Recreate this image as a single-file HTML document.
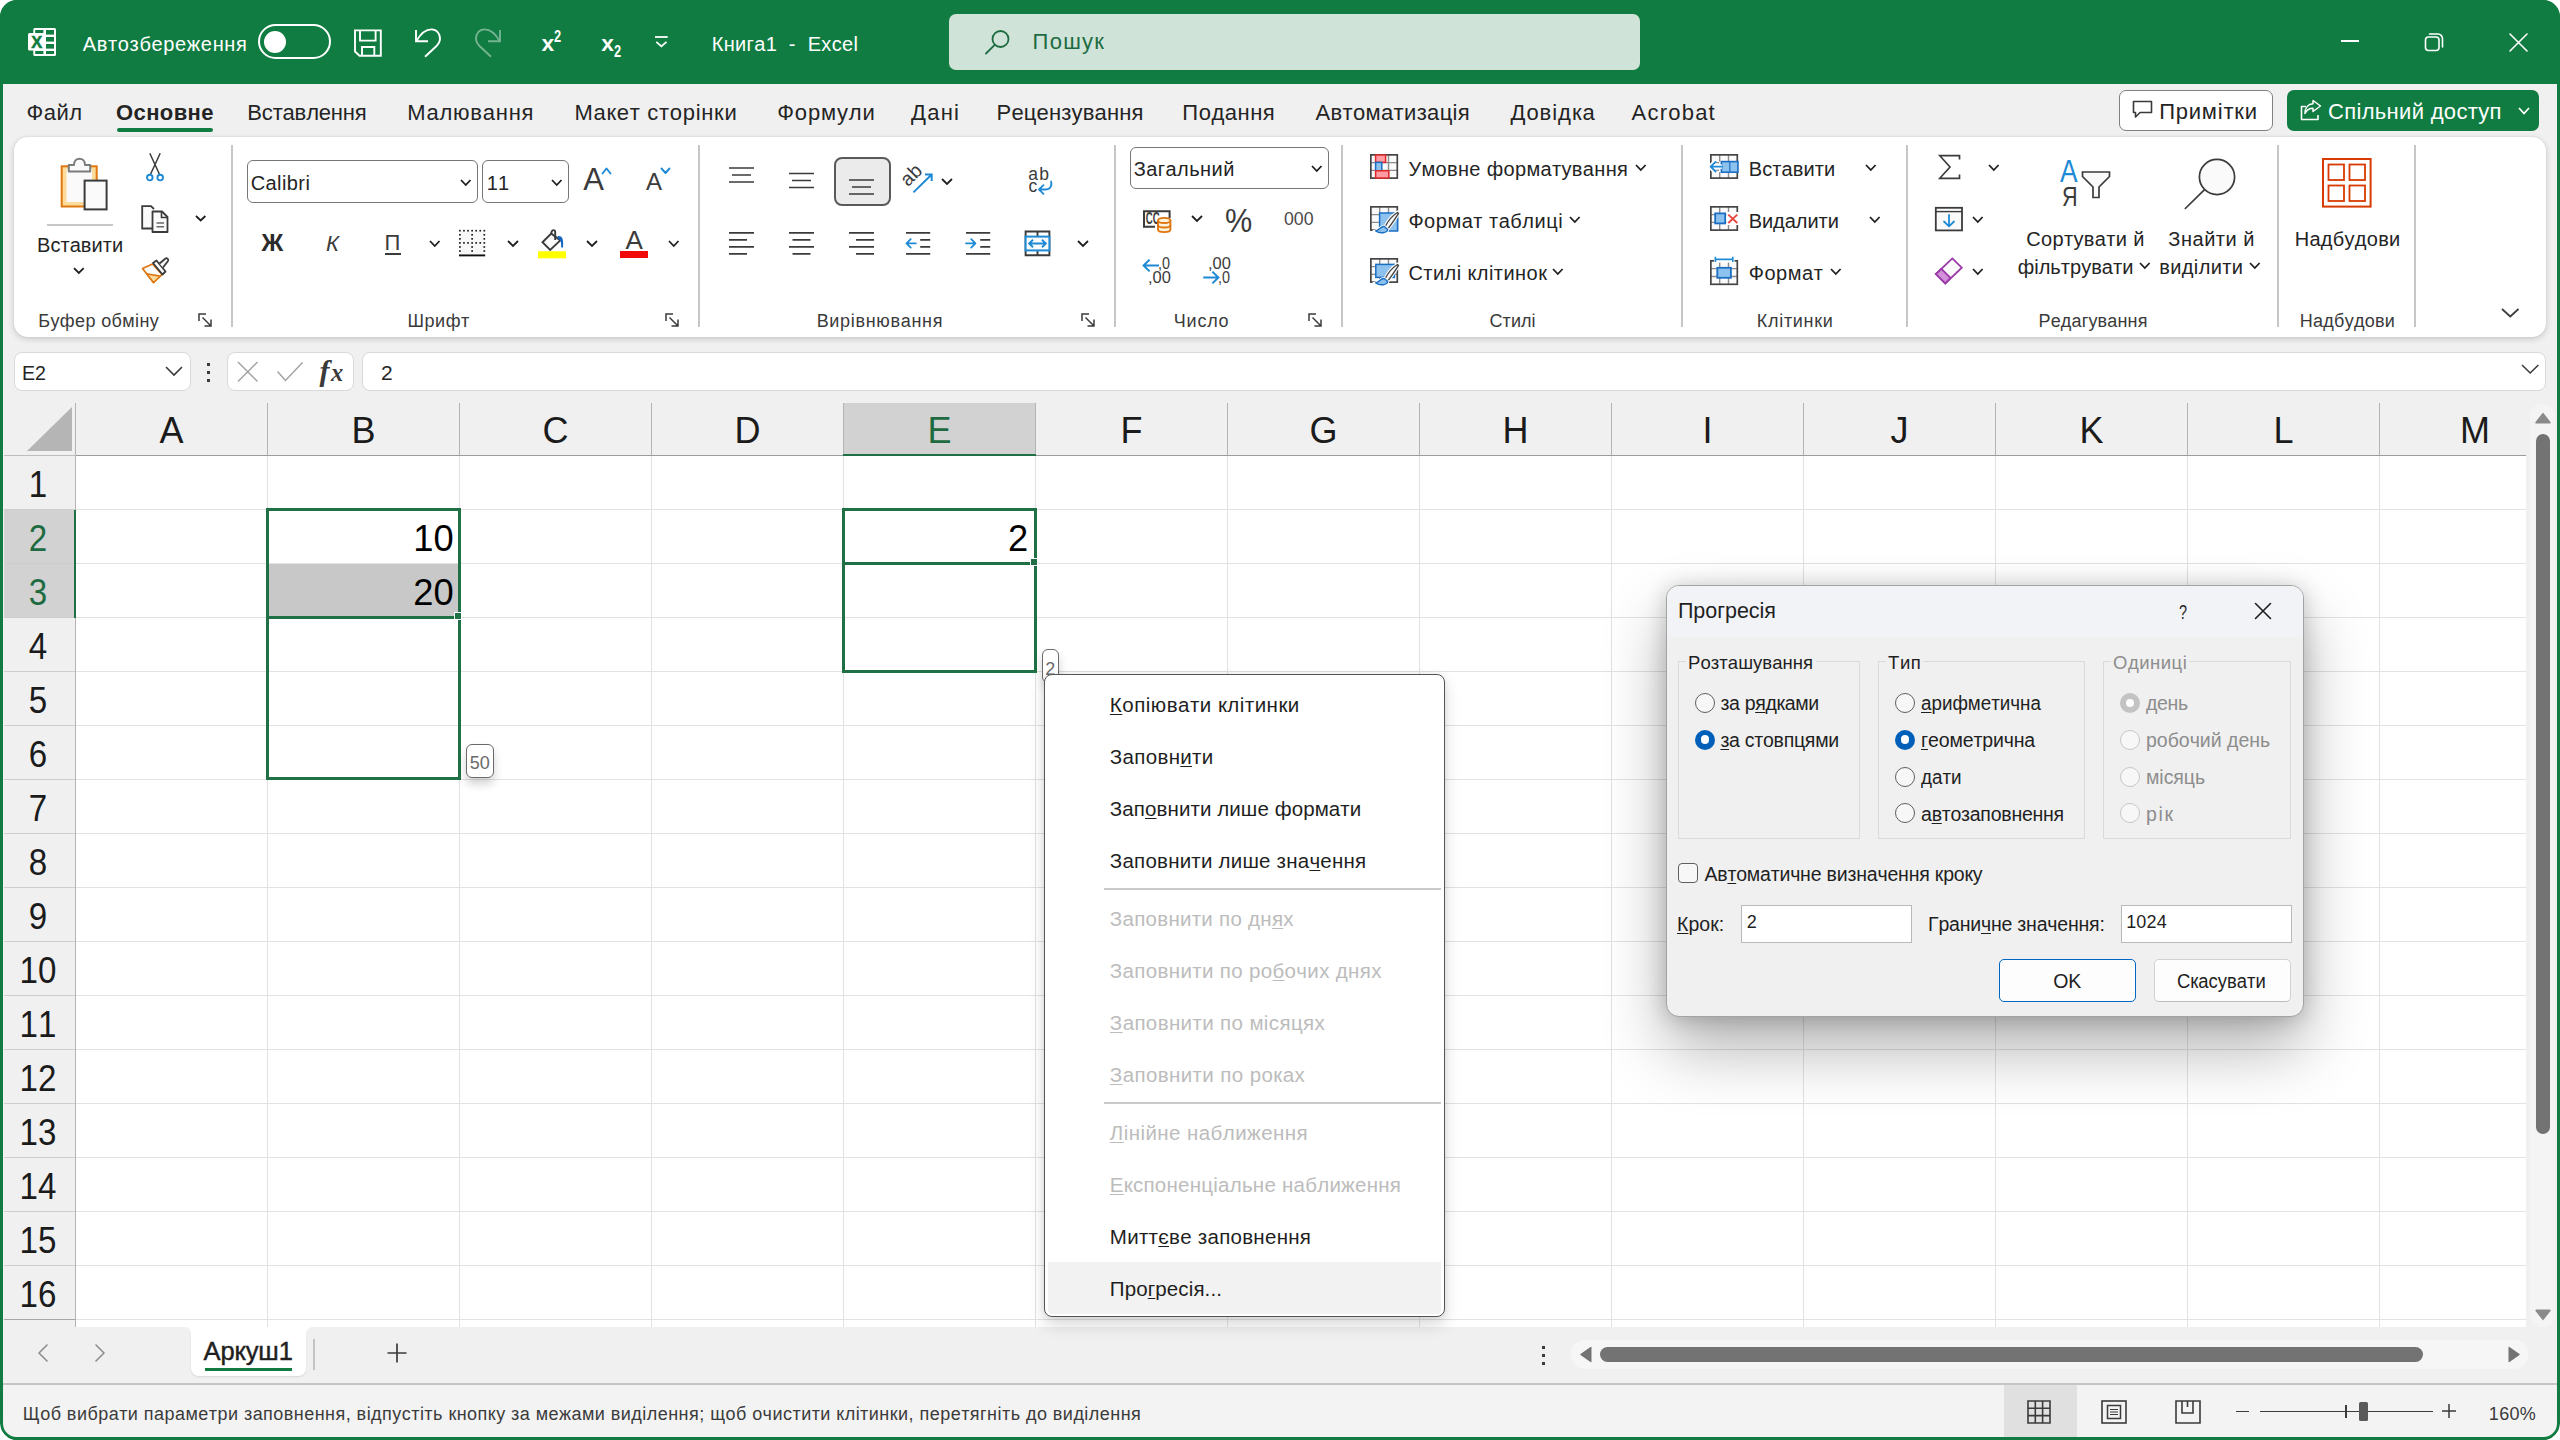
<!DOCTYPE html>
<html lang="uk"><head><meta charset="utf-8"><title>Excel</title><style>
html,body{margin:0;padding:0;background:#fff}
body{width:2560px;height:1440px;position:relative;overflow:hidden;font-family:"Liberation Sans",sans-serif;font-kerning:none}
#w{position:absolute;left:0;top:0;width:2560px;height:1440px;border-radius:17px;overflow:hidden;background:#f0f0f0}
#w div,#w svg,#w .t{position:absolute}
#w svg{overflow:visible}
.t{white-space:pre;line-height:1}
u{text-decoration:underline;text-decoration-thickness:1.2px;text-underline-offset:2px}
</style></head><body><div id="w">
<!-- s_title -->
<div style="left:0px;top:0px;width:2560px;height:84px;background:#107c41"></div>
<svg style="left:28px;top:28px;" width="28" height="28" viewBox="0 0 28 28"><rect x="5.3" y="0" width="22.7" height="28" rx="1.5" fill="#fff"/>
<g fill="#107c41"><rect x="7.2" y="2" width="8.2" height="3"/><rect x="18" y="2" width="8" height="4.6"/>
<rect x="18" y="9" width="8" height="4.6"/><rect x="18" y="16" width="8" height="4.6"/>
<rect x="7.2" y="23" width="8.2" height="3"/><rect x="18" y="23" width="8" height="3"/></g>
<rect x="0" y="5" width="17" height="17.5" rx="1.5" fill="#fff"/>
<text x="8.7" y="19.6" font-family="Liberation Sans, sans-serif" font-weight="700" font-size="16.5" text-anchor="middle" fill="#107c41" stroke="#107c41" stroke-width="0.5">X</text></svg>
<span class="t" style="left:82.70px;top:33.52px;font-size:20px;color:#fff;letter-spacing:0.656px;">Автозбереження</span>
<div style="left:258px;top:24px;width:73px;height:35px;border:2px solid #fff;border-radius:18px;box-sizing:border-box"></div>
<div style="left:264px;top:31px;width:22px;height:22px;background:#fff;border-radius:50%"></div>
<svg style="left:350px;top:25px;" width="36" height="36" viewBox="0 0 36 36"><path d="M5 5.4 H30.8 V30.8 H9.5 L5 26.5 Z" fill="none" stroke="#fff" stroke-width="1.9" stroke-linejoin="miter"/>
<path d="M10 5.4 V15.6 H25.6 V5.4" fill="none" stroke="#fff" stroke-width="1.9"/>
<path d="M12 30.8 V22 H24.3 V30.8" fill="none" stroke="#fff" stroke-width="1.9"/></svg>
<svg style="left:0px;top:0px;" width="700" height="84" viewBox="0 0 700 84"><path d="M416 30 V41.3 H428 M416.5 41 C421 33 427 29.4 431.5 29.4 C437 29.4 440 34 440 38.5 C440 41.5 438.5 44 436 46.5 L425 56.8" fill="none" stroke="#fff" stroke-width="1.9" stroke-linejoin="miter"/><g transform="translate(916 0) scale(-1 1)" opacity="0.42"><path d="M416 30 V41.3 H428 M416.5 41 C421 33 427 29.4 431.5 29.4 C437 29.4 440 34 440 38.5 C440 41.5 438.5 44 436 46.5 L425 56.8" fill="none" stroke="#fff" stroke-width="1.9" stroke-linejoin="miter"/></g></svg>
<span class="t" style="left:541.40px;top:31.55px;font-size:22.8px;color:#fff;font-weight:700;">x</span>
<span class="t" style="left:553.80px;top:28.51px;font-size:16px;color:#fff;font-weight:700;transform:scaleX(.8);transform-origin:0 50%;">2</span>
<span class="t" style="left:601.20px;top:31.55px;font-size:22.8px;color:#fff;font-weight:700;">x</span>
<span class="t" style="left:613.80px;top:44.21px;font-size:16px;color:#fff;font-weight:700;transform:scaleX(.8);transform-origin:0 50%;">2</span>
<svg style="left:653px;top:33px;" width="18" height="16" viewBox="0 0 18 16"><path d="M2 4 H14.7" stroke="#fff" stroke-width="1.8"/><path d="M3.3 8.8 L8.4 13.3 L13.5 8.8" fill="none" stroke="#fff" stroke-width="1.8" stroke-linejoin="miter"/></svg>
<span class="t" style="left:711.70px;top:33.52px;font-size:20px;color:#fff;letter-spacing:0.333px;">Книга1  -  Excel</span>
<div style="left:949px;top:14px;width:691px;height:56px;background:#cfe3d8;border-radius:7px"></div>
<svg style="left:983px;top:28px;" width="30" height="30" viewBox="0 0 30 30"><circle cx="17.5" cy="11" r="8" fill="none" stroke="#1e6b41" stroke-width="1.8"/><path d="M11.7 16.8 L3 25.5" stroke="#1e6b41" stroke-width="1.8" stroke-linecap="round"/></svg>
<span class="t" style="left:1032.57px;top:31.33px;font-size:22px;color:#1e6b41;letter-spacing:1.273px;">Пошук</span>
<div style="left:2341px;top:40px;width:18px;height:1.6px;background:#fff"></div>
<svg style="left:2423px;top:31px;" width="23" height="23" viewBox="0 0 23 23"><rect x="2.5" y="6" width="13.5" height="13.5" rx="3" fill="none" stroke="#fff" stroke-width="1.6"/><path d="M6.5 3 H15 A4.5 4.5 0 0 1 19.5 7.5 V16" fill="none" stroke="#fff" stroke-width="1.6" stroke-linecap="round"/></svg>
<svg style="left:2507px;top:31px;" width="23" height="23" viewBox="0 0 23 23"><path d="M3 3 L20 20 M20 3 L3 20" stroke="#fff" stroke-width="1.6" stroke-linecap="round"/></svg>
<span class="t" style="left:26.57px;top:101.83px;font-size:22px;color:#242424;letter-spacing:0.442px;">Файл</span>
<span class="t" style="left:247.32px;top:101.83px;font-size:22px;color:#242424;letter-spacing:-0.172px;">Вставлення</span>
<span class="t" style="left:407.32px;top:101.83px;font-size:22px;color:#242424;letter-spacing:0.765px;">Малювання</span>
<span class="t" style="left:574.57px;top:101.83px;font-size:22px;color:#242424;letter-spacing:0.697px;">Макет сторінки</span>
<span class="t" style="left:777.32px;top:101.83px;font-size:22px;color:#242424;letter-spacing:0.828px;">Формули</span>
<span class="t" style="left:911.07px;top:101.83px;font-size:22px;color:#242424;letter-spacing:1.249px;">Дані</span>
<span class="t" style="left:996.57px;top:101.83px;font-size:22px;color:#242424;letter-spacing:0.163px;">Рецензування</span>
<span class="t" style="left:1182.32px;top:101.83px;font-size:22px;color:#242424;letter-spacing:0.513px;">Подання</span>
<span class="t" style="left:1315.57px;top:101.83px;font-size:22px;color:#242424;letter-spacing:0.337px;">Автоматизація</span>
<span class="t" style="left:1510.57px;top:101.83px;font-size:22px;color:#242424;letter-spacing:0.958px;">Довідка</span>
<span class="t" style="left:1631.57px;top:101.83px;font-size:22px;color:#242424;letter-spacing:1.224px;">Acrobat</span>
<span class="t" style="left:116.07px;top:101.83px;font-size:22px;color:#242424;letter-spacing:0.383px;font-weight:700;">Основне</span>
<div style="left:117px;top:127.6px;width:96px;height:4.3px;background:#107c41;border-radius:2.2px"></div>
<div style="left:2119px;top:89.5px;width:153.5px;height:41px;background:#fff;border:1.8px solid #808080;border-radius:7px;box-sizing:border-box"></div>
<svg style="left:2131px;top:99px;" width="24" height="22" viewBox="0 0 24 22"><path d="M2.5 2.5 H20.5 V13.5 H9 L4.5 18 V13.5 H2.5 Z" fill="none" stroke="#3a3a3a" stroke-width="1.6" stroke-linejoin="round"/></svg>
<span class="t" style="left:2159.17px;top:101.33px;font-size:22px;color:#242424;letter-spacing:0.782px;">Примітки</span>
<div style="left:2287px;top:89.5px;width:252px;height:41.5px;background:#107c41;border-radius:7px"></div>
<svg style="left:2299px;top:98px;" width="24" height="24" viewBox="0 0 24 24"><path d="M7 8.5 H2.5 V21.5 H19 V17" fill="none" stroke="#fff" stroke-width="1.6" stroke-linejoin="round"/>
<path d="M14 2.5 L21.5 8 L14 13.5 V10.2 C10 10.2 7.5 12 6 15.5 C6 10 9 6 14 5.8 Z" fill="none" stroke="#fff" stroke-width="1.5" stroke-linejoin="round"/></svg>
<span class="t" style="left:2327.97px;top:101.33px;font-size:22px;color:#fff;letter-spacing:0.324px;">Спільний доступ</span>
<svg style="left:2518px;top:107.2px;" width="12" height="8" viewBox="0 0 12 8"><path d="M1 1 L6.0 6.5 L11 1" fill="none" stroke="#fff" stroke-width="1.8" stroke-linecap="butt" stroke-linejoin="miter"/></svg>
<!-- s_ribbon -->
<div style="left:14px;top:137.3px;width:2532px;height:199.6px;background:#fff;border-radius:14px;box-shadow:0 2px 6px rgba(0,0,0,.16),0 0 2px rgba(0,0,0,.10)"></div>
<div style="left:231.25px;top:145px;width:1.5px;height:182px;background:#c6c6c6"></div>
<div style="left:698.25px;top:145px;width:1.5px;height:182px;background:#c6c6c6"></div>
<div style="left:1114.25px;top:145px;width:1.5px;height:182px;background:#c6c6c6"></div>
<div style="left:1341.25px;top:145px;width:1.5px;height:182px;background:#c6c6c6"></div>
<div style="left:1681.25px;top:145px;width:1.5px;height:182px;background:#c6c6c6"></div>
<div style="left:1906.25px;top:145px;width:1.5px;height:182px;background:#c6c6c6"></div>
<div style="left:2277.25px;top:145px;width:1.5px;height:182px;background:#c6c6c6"></div>
<div style="left:2414.25px;top:145px;width:1.5px;height:182px;background:#c6c6c6"></div>
<span class="t" style="left:38.23px;top:312.21px;font-size:18px;color:#3a3a3a;letter-spacing:0.391px;">Буфер обміну</span>
<span class="t" style="left:407.43px;top:312.21px;font-size:18px;color:#3a3a3a;letter-spacing:0.564px;">Шрифт</span>
<span class="t" style="left:816.63px;top:312.21px;font-size:18px;color:#3a3a3a;letter-spacing:0.691px;">Вирівнювання</span>
<span class="t" style="left:1173.83px;top:312.21px;font-size:18px;color:#3a3a3a;letter-spacing:0.750px;">Число</span>
<span class="t" style="left:1489.53px;top:312.21px;font-size:18px;color:#3a3a3a;letter-spacing:0.067px;">Стилі</span>
<span class="t" style="left:1756.83px;top:312.21px;font-size:18px;color:#3a3a3a;letter-spacing:0.689px;">Клітинки</span>
<span class="t" style="left:2038.53px;top:312.21px;font-size:18px;color:#3a3a3a;letter-spacing:0.158px;">Редагування</span>
<span class="t" style="left:2299.83px;top:312.21px;font-size:18px;color:#3a3a3a;letter-spacing:0.253px;">Надбудови</span>
<svg style="left:198px;top:313px;" width="14" height="14" viewBox="0 0 14 14"><path d="M1 8 V1 H8" fill="none" stroke="#3b3b3b" stroke-width="1.5"/><path d="M4.5 4.5 L12.5 12.5 M6.5 13 H13 V6.5" fill="none" stroke="#3b3b3b" stroke-width="1.5"/></svg>
<svg style="left:665px;top:313px;" width="14" height="14" viewBox="0 0 14 14"><path d="M1 8 V1 H8" fill="none" stroke="#3b3b3b" stroke-width="1.5"/><path d="M4.5 4.5 L12.5 12.5 M6.5 13 H13 V6.5" fill="none" stroke="#3b3b3b" stroke-width="1.5"/></svg>
<svg style="left:1081px;top:313px;" width="14" height="14" viewBox="0 0 14 14"><path d="M1 8 V1 H8" fill="none" stroke="#3b3b3b" stroke-width="1.5"/><path d="M4.5 4.5 L12.5 12.5 M6.5 13 H13 V6.5" fill="none" stroke="#3b3b3b" stroke-width="1.5"/></svg>
<svg style="left:1308px;top:313px;" width="14" height="14" viewBox="0 0 14 14"><path d="M1 8 V1 H8" fill="none" stroke="#3b3b3b" stroke-width="1.5"/><path d="M4.5 4.5 L12.5 12.5 M6.5 13 H13 V6.5" fill="none" stroke="#3b3b3b" stroke-width="1.5"/></svg>
<svg style="left:58px;top:156px;" width="52" height="56" viewBox="0 0 52 56"><rect x="3.7" y="10.3" width="35" height="40.2" fill="#fbdc9a" stroke="#e0780f" stroke-width="2"/>
<rect x="8.5" y="13" width="25.5" height="33" fill="#fafafa"/>
<path d="M10.8 15.5 V9 H16 C16 0.5 27 0.5 27 9 H32.2 V15.5 Z" fill="#fafafa" stroke="#7b7b7b" stroke-width="2" stroke-linejoin="round"/>
<rect x="26.6" y="24.6" width="22" height="28.8" fill="#fafafa" stroke="#3b3b3b" stroke-width="2"/></svg>
<div style="left:47px;top:224.3px;width:66px;height:1.5px;background:#c8c8c8"></div>
<span class="t" style="left:37.00px;top:235.32px;font-size:20px;color:#242424;letter-spacing:0.062px;">Вставити</span>
<svg style="left:73.3px;top:267.2px;" width="11.7" height="7.5" viewBox="0 0 11.7 7.5"><path d="M1 1 L5.85 6.0 L10.7 1" fill="none" stroke="#1f1f1f" stroke-width="1.8" stroke-linecap="butt" stroke-linejoin="miter"/></svg>
<svg style="left:144px;top:151px;" width="24" height="32" viewBox="0 0 24 32"><path d="M5.8 2.3 L15.7 23.7 M16.2 2.3 L6.3 23.7" stroke="#3b3b3b" stroke-width="1.5" fill="none"/>
<circle cx="5.8" cy="26.6" r="2.8" fill="none" stroke="#1e8ad6" stroke-width="1.9"/><circle cx="16.2" cy="26.6" r="2.8" fill="none" stroke="#1e8ad6" stroke-width="1.9"/></svg>
<svg style="left:140px;top:204px;" width="30" height="30" viewBox="0 0 30 30"><path d="M13.5 24.5 H2.2 V2.2 H11 L14 5" fill="#fafafa" stroke="#3b3b3b" stroke-width="1.8"/>
<path d="M12.5 7.5 H22 L27.5 13 V28 H12.5 Z" fill="#fafafa" stroke="#3b3b3b" stroke-width="1.8" stroke-linejoin="round"/>
<path d="M21.5 8 V13.5 H27" fill="none" stroke="#3b3b3b" stroke-width="1.6"/>
<path d="M16.5 19 H24 M16.5 22.8 H24" stroke="#6a6a6a" stroke-width="1.5"/></svg>
<svg style="left:194.6px;top:215.39999999999998px;" width="11.4" height="7" viewBox="0 0 11.4 7"><path d="M1 1 L5.7 5.5 L10.4 1" fill="none" stroke="#1f1f1f" stroke-width="1.8" stroke-linecap="butt" stroke-linejoin="miter"/></svg>
<svg style="left:140px;top:256px;" width="30" height="30" viewBox="0 0 30 30"><path d="M12.5 8 L2.5 12.5 L13.5 26.5 L22 18.5 Z" fill="#fafafa" stroke="#de7510" stroke-width="1.7" stroke-linejoin="round"/>
<path d="M6.5 17.5 C11 19 16 19.5 20.5 20 L13.5 26.5 Z" fill="#fbdc9a" stroke="#de7510" stroke-width="1.5" stroke-linejoin="round"/>
<path d="M13 7 L16.5 4.5 L25.5 15.5 L22.5 18.5 Z" fill="#fafafa" stroke="#3b3b3b" stroke-width="1.8" stroke-linejoin="round"/>
<path d="M19.5 7.5 L25.5 2.5 C27 1.5 29 3.5 28 5 L23 11.5" fill="#fafafa" stroke="#3b3b3b" stroke-width="1.8" stroke-linejoin="round"/></svg>
<div style="left:247px;top:160px;width:230.5px;height:42.5px;background:#fff;border:1.7px solid #767676;border-radius:6px;box-sizing:border-box"></div>
<span class="t" style="left:250.70px;top:173.12px;font-size:20px;color:#242424;letter-spacing:0.419px;">Calibri</span>
<svg style="left:460px;top:178.7px;" width="11.5" height="7.5" viewBox="0 0 11.5 7.5"><path d="M1 1 L5.75 6.0 L10.5 1" fill="none" stroke="#1f1f1f" stroke-width="1.8" stroke-linecap="butt" stroke-linejoin="miter"/></svg>
<div style="left:481.5px;top:160px;width:87px;height:42.5px;background:#fff;border:1.7px solid #767676;border-radius:6px;box-sizing:border-box"></div>
<span class="t" style="left:486.80px;top:173.12px;font-size:20px;color:#242424;">11</span>
<svg style="left:551px;top:178.7px;" width="11.5" height="7.5" viewBox="0 0 11.5 7.5"><path d="M1 1 L5.75 6.0 L10.5 1" fill="none" stroke="#1f1f1f" stroke-width="1.8" stroke-linecap="butt" stroke-linejoin="miter"/></svg>
<span class="t" style="left:583.20px;top:163.81px;font-size:31px;color:#3b3b3b;">A</span>
<svg style="left:601px;top:166px;" width="12" height="10" viewBox="0 0 12 10"><path d="M1.5 7.5 L5.5 2.5 L9.5 7.5" fill="none" stroke="#1e8ad6" stroke-width="1.9" stroke-linejoin="round" stroke-linecap="round"/></svg>
<span class="t" style="left:646.00px;top:169.73px;font-size:24px;color:#3b3b3b;">A</span>
<svg style="left:660px;top:166px;" width="12" height="10" viewBox="0 0 12 10"><path d="M1.5 2.5 L5.5 7 L9.5 2.5" fill="none" stroke="#1e8ad6" stroke-width="1.9" stroke-linejoin="round" stroke-linecap="round"/></svg>
<span class="t" style="left:261.50px;top:231.13px;font-size:24px;color:#2b2b2b;font-weight:700;">Ж</span>
<span class="t" style="left:326.00px;top:232.83px;font-size:22px;color:#3b3b3b;font-style:italic;">К</span>
<span class="t" style="left:384.50px;top:231.83px;font-size:22px;color:#3b3b3b;">П</span>
<div style="left:385px;top:253px;width:16px;height:1.6px;background:#3b3b3b"></div>
<svg style="left:429px;top:239.7px;" width="11.5" height="7.5" viewBox="0 0 11.5 7.5"><path d="M1 1 L5.75 6.0 L10.5 1" fill="none" stroke="#1f1f1f" stroke-width="1.8" stroke-linecap="butt" stroke-linejoin="miter"/></svg>
<svg style="left:458px;top:229px;" width="28" height="28" viewBox="0 0 28 28"><rect x="1.9" y="1.7" width="24.4" height="23.6" fill="#f8f8f8"/><g fill="#1f1f1f"><rect x="1.05" y="0.85" width="1.7" height="1.7"/><rect x="1.05" y="4.92" width="1.7" height="1.7"/><rect x="1.05" y="8.99" width="1.7" height="1.7"/><rect x="1.05" y="13.06" width="1.7" height="1.7"/><rect x="1.05" y="17.13" width="1.7" height="1.7"/><rect x="1.05" y="21.20" width="1.7" height="1.7"/><rect x="5.12" y="0.85" width="1.7" height="1.7"/><rect x="5.12" y="13.06" width="1.7" height="1.7"/><rect x="9.19" y="0.85" width="1.7" height="1.7"/><rect x="9.19" y="13.06" width="1.7" height="1.7"/><rect x="13.26" y="0.85" width="1.7" height="1.7"/><rect x="13.26" y="4.92" width="1.7" height="1.7"/><rect x="13.26" y="8.99" width="1.7" height="1.7"/><rect x="13.26" y="13.06" width="1.7" height="1.7"/><rect x="13.26" y="17.13" width="1.7" height="1.7"/><rect x="13.26" y="21.20" width="1.7" height="1.7"/><rect x="17.33" y="0.85" width="1.7" height="1.7"/><rect x="17.33" y="13.06" width="1.7" height="1.7"/><rect x="21.40" y="0.85" width="1.7" height="1.7"/><rect x="21.40" y="13.06" width="1.7" height="1.7"/><rect x="25.47" y="0.85" width="1.7" height="1.7"/><rect x="25.47" y="4.92" width="1.7" height="1.7"/><rect x="25.47" y="8.99" width="1.7" height="1.7"/><rect x="25.47" y="13.06" width="1.7" height="1.7"/><rect x="25.47" y="17.13" width="1.7" height="1.7"/><rect x="25.47" y="21.20" width="1.7" height="1.7"/></g><path d="M1 26.4 H27.2" stroke="#111" stroke-width="1.9"/></svg>
<svg style="left:507px;top:240.1px;" width="12" height="7.4" viewBox="0 0 12 7.4"><path d="M1 1 L6.0 5.9 L11 1" fill="none" stroke="#1f1f1f" stroke-width="1.8" stroke-linecap="butt" stroke-linejoin="miter"/></svg>
<svg style="left:538px;top:228px;" width="30" height="32" viewBox="0 0 30 32"><path d="M4.5 14.2 L13.2 5.6 L22.3 12.4 L12.2 22 Z" fill="#fafafa" stroke="#3b3b3b" stroke-width="1.9" stroke-linejoin="miter"/>
<path d="M13.3 5.9 C13.3 1.2 17.2 1.2 17.2 4.2 V12" fill="none" stroke="#3b3b3b" stroke-width="1.9"/>
<path d="M19.6 8.2 C24.2 7.4 25.8 11 25 19.6 L23.2 19.6 C23.4 14 22.6 11.6 19.8 11 Z" fill="#1565c0"/>
<rect x="0" y="23.3" width="28" height="7" fill="#ffff00"/></svg>
<svg style="left:586px;top:240.1px;" width="12" height="7.4" viewBox="0 0 12 7.4"><path d="M1 1 L6.0 5.9 L11 1" fill="none" stroke="#1f1f1f" stroke-width="1.8" stroke-linecap="butt" stroke-linejoin="miter"/></svg>
<span class="t" style="left:625.53px;top:226.94px;font-size:26px;color:#3b3b3b;">A</span>
<div style="left:620px;top:251.3px;width:28px;height:7px;background:#f00a0a"></div>
<svg style="left:668px;top:239.7px;" width="11.5" height="7.5" viewBox="0 0 11.5 7.5"><path d="M1 1 L5.75 6.0 L10.5 1" fill="none" stroke="#1f1f1f" stroke-width="1.8" stroke-linecap="butt" stroke-linejoin="miter"/></svg>
<svg style="left:728.5px;top:160px;" width="30" height="30" viewBox="0 0 30 30"><path d="M0 8 H25 M3 15 H22 M0 22 H25 " stroke="#3b3b3b" stroke-width="1.7" fill="none"/></svg>
<svg style="left:788.5px;top:160px;" width="30" height="30" viewBox="0 0 30 30"><path d="M0 13.5 H25 M3 20.5 H22 M0 27.5 H25 " stroke="#3b3b3b" stroke-width="1.7" fill="none"/></svg>
<div style="left:834px;top:157px;width:57px;height:48.5px;background:#ebebeb;border:2px solid #5a5a5a;border-radius:8px;box-sizing:border-box"></div>
<svg style="left:848.5px;top:160px;" width="30" height="30" viewBox="0 0 30 30"><path d="M0 20 H25 M3 27 H22 M0 34 H25 " stroke="#3b3b3b" stroke-width="1.7" fill="none"/></svg>
<svg style="left:728.5px;top:225px;" width="30" height="30" viewBox="0 0 30 30"><path d="M0 7.8 H25 M0 14.8 H18 M0 21.8 H25 M0 28.8 H18 " stroke="#3b3b3b" stroke-width="1.7" fill="none"/></svg>
<svg style="left:788.5px;top:225px;" width="30" height="30" viewBox="0 0 30 30"><path d="M0 7.8 H25 M3.5 14.8 H21.5 M0 21.8 H25 M3.5 28.8 H21.5 " stroke="#3b3b3b" stroke-width="1.7" fill="none"/></svg>
<svg style="left:848.5px;top:225px;" width="30" height="30" viewBox="0 0 30 30"><path d="M0 7.8 H25 M7 14.8 H25 M0 21.8 H25 M7 28.8 H25 " stroke="#3b3b3b" stroke-width="1.7" fill="none"/></svg>
<svg style="left:905px;top:225px;" width="30" height="34" viewBox="0 0 30 34"><path d="M1 7.9 H25.2 M15.2 14.9 H25.2 M15.2 21.9 H25.2 M1 28.9 H25.2" stroke="#3b3b3b" stroke-width="1.7" fill="none"/>
<path d="M10.8 18.4 H1.7 M5.7 14.2 L1.5 18.4 L5.7 22.6" stroke="#1e8ad6" stroke-width="1.8" fill="none" stroke-linecap="round" stroke-linejoin="round"/></svg>
<svg style="left:965px;top:225px;" width="30" height="34" viewBox="0 0 30 34"><path d="M1 7.9 H25.2 M15.2 14.9 H25.2 M15.2 21.9 H25.2 M1 28.9 H25.2" stroke="#3b3b3b" stroke-width="1.7" fill="none"/>
<path d="M1 18.4 H10.2 M6.2 14.2 L10.4 18.4 L6.2 22.6" stroke="#1e8ad6" stroke-width="1.8" fill="none" stroke-linecap="round" stroke-linejoin="round"/></svg>
<svg style="left:900px;top:163px;" width="36" height="34" viewBox="0 0 36 34"><text x="0" y="0" font-family="Liberation Sans, sans-serif" font-size="19.5" fill="#3b3b3b" transform="translate(8 24.2) rotate(-45)">ab</text>
<path d="M13.4 29.4 L31.4 11.8 M25 11.5 H31.7 V18" fill="none" stroke="#1e8ad6" stroke-width="2" stroke-linecap="butt" stroke-linejoin="miter"/></svg>
<svg style="left:941px;top:177.7px;" width="12" height="7.4" viewBox="0 0 12 7.4"><path d="M1 1 L6.0 5.9 L11 1" fill="none" stroke="#1f1f1f" stroke-width="1.8" stroke-linecap="butt" stroke-linejoin="miter"/></svg>
<span class="t" style="left:1028.20px;top:165.84px;font-size:17.5px;color:#3b3b3b;letter-spacing:1.331px;">ab</span>
<span class="t" style="left:1028.60px;top:178.24px;font-size:17.5px;color:#3b3b3b;">c</span>
<svg style="left:1037px;top:180px;" width="18" height="16" viewBox="0 0 18 16"><path d="M14 1.5 C15.5 6 13 9.5 8 9.5 H2.5 M6.5 5.2 L2 9.5 L6.5 13.8" fill="none" stroke="#1e8ad6" stroke-width="1.8" stroke-linecap="round" stroke-linejoin="round"/></svg>
<svg style="left:1023px;top:229px;" width="30" height="30" viewBox="0 0 30 30"><path d="M2.6 2.5 H26.4 V26.3 H2.6 Z M14.5 2.5 V7.5 M14.5 21.5 V26.3" fill="none" stroke="#3b3b3b" stroke-width="1.9"/>
<rect x="2.6" y="7.6" width="23.8" height="13.8" fill="#fafafa" stroke="#1e8ad6" stroke-width="2"/>
<path d="M6.6 14.5 H22.4 M10 10.8 L6.2 14.5 L10 18.2 M19 10.8 L22.8 14.5 L19 18.2" fill="none" stroke="#1e8ad6" stroke-width="1.9" stroke-linecap="butt" stroke-linejoin="miter"/></svg>
<svg style="left:1077px;top:240.1px;" width="12" height="7.4" viewBox="0 0 12 7.4"><path d="M1 1 L6.0 5.9 L11 1" fill="none" stroke="#1f1f1f" stroke-width="1.8" stroke-linecap="butt" stroke-linejoin="miter"/></svg>
<div style="left:1130px;top:146.5px;width:198.6px;height:42.5px;background:#fff;border:1.7px solid #767676;border-radius:6px;box-sizing:border-box"></div>
<span class="t" style="left:1133.70px;top:159.12px;font-size:20px;color:#242424;letter-spacing:0.449px;">Загальний</span>
<svg style="left:1311px;top:164.7px;" width="11.5" height="7.5" viewBox="0 0 11.5 7.5"><path d="M1 1 L5.75 6.0 L10.5 1" fill="none" stroke="#1f1f1f" stroke-width="1.8" stroke-linecap="butt" stroke-linejoin="miter"/></svg>
<svg style="left:1142px;top:209px;" width="32" height="26" viewBox="0 0 32 26"><path d="M27.6 9 V2.2 H2 V17.8 H13" fill="none" stroke="#3b3b3b" stroke-width="2"/>
<text x="0" y="0" font-family="Liberation Sans, sans-serif" font-size="16" font-weight="700" fill="#3b3b3b" transform="translate(3.8 15.4) scale(.6 1)">CC</text>
<path d="M16 11.5 C16 8 28.4 8 28.4 11.5 V20.5 C28.4 24 16 24 16 20.5 Z" fill="#fdf3dc" stroke="#de7510" stroke-width="1.9"/>
<path d="M16 11.5 C16 14.8 28.4 14.8 28.4 11.5 M16 16 C16 19.3 28.4 19.3 28.4 16" fill="none" stroke="#de7510" stroke-width="1.9"/></svg>
<svg style="left:1191px;top:215.39999999999998px;" width="12" height="7.4" viewBox="0 0 12 7.4"><path d="M1 1 L6.0 5.9 L11 1" fill="none" stroke="#1f1f1f" stroke-width="1.8" stroke-linecap="butt" stroke-linejoin="miter"/></svg>
<span class="t" style="left:1225.00px;top:202.97px;font-size:34px;color:#3b3b3b;transform:scaleX(.9);transform-origin:0 50%;">%</span>
<span class="t" style="left:1284.03px;top:209.81px;font-size:18px;color:#4a4a4a;transform:scaleX(0.9845);transform-origin:0 50%;">000</span>
<svg style="left:1142px;top:258.5px;" width="18" height="13" viewBox="0 0 18 13"><path d="M17 6.5 H2 M7.6 0.6 L1.6 6.5 L7.6 12.4" fill="none" stroke="#1e8ad6" stroke-width="2" stroke-linecap="butt" stroke-linejoin="miter"/></svg>
<span class="t" style="left:1157.80px;top:255.16px;font-size:17px;color:#3b3b3b;transform:scaleX(0.8458);transform-origin:0 50%;">,0</span>
<span class="t" style="left:1147.69px;top:269.36px;font-size:17px;color:#3b3b3b;transform:scaleX(0.9674);transform-origin:0 50%;">,00</span>
<span class="t" style="left:1207.89px;top:255.16px;font-size:17px;color:#3b3b3b;transform:scaleX(0.9674);transform-origin:0 50%;">,00</span>
<svg style="left:1202px;top:270.8px;" width="18" height="13" viewBox="0 0 18 13"><path d="M1.3 6.5 H16 M10.4 0.6 L16.4 6.5 L10.4 12.4" fill="none" stroke="#1e8ad6" stroke-width="2" stroke-linecap="butt" stroke-linejoin="miter"/></svg>
<span class="t" style="left:1218.00px;top:269.36px;font-size:17px;color:#3b3b3b;transform:scaleX(0.8458);transform-origin:0 50%;">,0</span>
<!-- s_ribbon2 -->
<svg style="left:1370px;top:154.4px;" width="29" height="26" viewBox="0 0 29 26"><rect x="0.85" y="0.85" width="26.45" height="23.25" fill="#fafafa"/><path d="M9.7 0.85 V24.1 M18.5 0.85 V24.1 M0.85 8.6 H27.3 M0.85 16.4 H27.3" stroke="#8c8c8c" stroke-width="1.4" fill="none"/><rect x="0.85" y="0.85" width="26.45" height="23.25" fill="none" stroke="#444" stroke-width="1.7"/><rect x="5.6" y="1" width="10" height="7.4" fill="#ff9ba3" stroke="#e12a2a" stroke-width="1.5"/>
<rect x="5.6" y="8.4" width="6.2" height="8.4" fill="#8ec2ee" stroke="#1a6fc4" stroke-width="1.5"/>
<rect x="5.6" y="16.8" width="13.2" height="7.2" fill="#ff9ba3" stroke="#e12a2a" stroke-width="1.5"/></svg>
<span class="t" style="left:1408.40px;top:159.12px;font-size:20px;color:#242424;letter-spacing:0.342px;">Умовне форматування</span>
<svg style="left:1634.6px;top:163.7px;" width="11.6" height="7.5" viewBox="0 0 11.6 7.5"><path d="M1 1 L5.8 6.0 L10.6 1" fill="none" stroke="#1f1f1f" stroke-width="1.8" stroke-linecap="butt" stroke-linejoin="miter"/></svg>
<svg style="left:1370px;top:206.4px;" width="29" height="28" viewBox="0 0 29 28"><rect x="0.85" y="0.85" width="26.45" height="23.25" fill="#fafafa"/><path d="M9.7 0.85 V24.1 M18.5 0.85 V24.1 M0.85 8.6 H27.3 M0.85 16.4 H27.3" stroke="#8c8c8c" stroke-width="1.4" fill="none"/><rect x="0.85" y="0.85" width="26.45" height="23.25" fill="none" stroke="#444" stroke-width="1.7"/><rect x="9.6" y="7" width="18" height="18" fill="#8ec2ee" stroke="#1a6fc4" stroke-width="1.5"/><path d="M27.5 6.5 C23 9 17.5 16 14.7 21.5 L17.2 23.5 C21 19 25.5 12 28.5 7.5 Z" fill="#fafafa" stroke="#fff" stroke-width="3.5"/>
<path d="M27.5 6.5 C23 9 17.5 16 14.7 21.5 L17.2 23.5 C21 19 25.5 12 28.5 7.5 Z" fill="#fafafa" stroke="#444" stroke-width="1.4" stroke-linejoin="round"/>
<path d="M14.2 20.5 C10.7 20 9.7 24 5.7 25 C10.2 28 17.2 27 17.7 23.5 Z" fill="#8ec2ee" stroke="#fff" stroke-width="3"/>
<path d="M14.2 20.5 C10.7 20 9.7 24 5.7 25 C10.2 28 17.2 27 17.7 23.5 Z" fill="#8ec2ee" stroke="#1a6fc4" stroke-width="1.5" stroke-linejoin="round"/></svg>
<span class="t" style="left:1408.40px;top:211.02px;font-size:20px;color:#242424;letter-spacing:0.513px;">Формат таблиці</span>
<svg style="left:1568.7px;top:215.7px;" width="11.6" height="7.5" viewBox="0 0 11.6 7.5"><path d="M1 1 L5.8 6.0 L10.6 1" fill="none" stroke="#1f1f1f" stroke-width="1.8" stroke-linecap="butt" stroke-linejoin="miter"/></svg>
<svg style="left:1370px;top:258.4px;" width="29" height="28" viewBox="0 0 29 28"><rect x="0.85" y="0.85" width="26.45" height="23.25" fill="#fafafa"/><path d="M9.7 0.85 V24.1 M18.5 0.85 V24.1 M0.85 8.6 H27.3 M0.85 16.4 H27.3" stroke="#8c8c8c" stroke-width="1.4" fill="none"/><rect x="0.85" y="0.85" width="26.45" height="23.25" fill="none" stroke="#444" stroke-width="1.7"/><rect x="5.8" y="6.4" width="18.6" height="13" fill="#8ec2ee" stroke="#1a6fc4" stroke-width="1.5"/><path d="M27.5 6.5 C23 9 17.5 16 14.7 21.5 L17.2 23.5 C21 19 25.5 12 28.5 7.5 Z" fill="#fafafa" stroke="#fff" stroke-width="3.5"/>
<path d="M27.5 6.5 C23 9 17.5 16 14.7 21.5 L17.2 23.5 C21 19 25.5 12 28.5 7.5 Z" fill="#fafafa" stroke="#444" stroke-width="1.4" stroke-linejoin="round"/>
<path d="M14.2 20.5 C10.7 20 9.7 24 5.7 25 C10.2 28 17.2 27 17.7 23.5 Z" fill="#8ec2ee" stroke="#fff" stroke-width="3"/>
<path d="M14.2 20.5 C10.7 20 9.7 24 5.7 25 C10.2 28 17.2 27 17.7 23.5 Z" fill="#8ec2ee" stroke="#1a6fc4" stroke-width="1.5" stroke-linejoin="round"/></svg>
<span class="t" style="left:1408.40px;top:263.12px;font-size:20px;color:#242424;letter-spacing:0.457px;">Стилі клітинок</span>
<svg style="left:1552px;top:267.7px;" width="11.6" height="7.5" viewBox="0 0 11.6 7.5"><path d="M1 1 L5.8 6.0 L10.6 1" fill="none" stroke="#1f1f1f" stroke-width="1.8" stroke-linecap="butt" stroke-linejoin="miter"/></svg>
<svg style="left:1710px;top:154.4px;" width="29" height="26" viewBox="0 0 29 26"><rect x="0.85" y="0.85" width="26.45" height="23.25" fill="#fafafa"/><path d="M9.7 0.85 V24.1 M18.5 0.85 V24.1 M0.85 8.6 H27.3 M0.85 16.4 H27.3" stroke="#8c8c8c" stroke-width="1.4" fill="none"/><rect x="0.85" y="0.85" width="26.45" height="23.25" fill="none" stroke="#444" stroke-width="1.7"/><rect x="9" y="7.6" width="19" height="10.6" fill="#fff"/><rect x="11.4" y="7.6" width="16.5" height="10.6" fill="#8ec2ee" stroke="#1a6fc4" stroke-width="1.6"/>
<path d="M19.8 7.6 V18" stroke="#1a6fc4" stroke-width="1.2"/>
<path d="M-0.5 12.7 H12 M5 7.7 L-0.2 12.7 L5 17.7" fill="none" stroke="#fff" stroke-width="4.2"/>
<path d="M0.8 12.7 H12 M5.6 7.9 L0.6 12.7 L5.6 17.5" fill="none" stroke="#1e8ad6" stroke-width="1.8" stroke-linecap="round" stroke-linejoin="round"/></svg>
<span class="t" style="left:1748.70px;top:159.12px;font-size:20px;color:#242424;letter-spacing:0.119px;">Вставити</span>
<svg style="left:1865px;top:163.7px;" width="11.6" height="7.5" viewBox="0 0 11.6 7.5"><path d="M1 1 L5.8 6.0 L10.6 1" fill="none" stroke="#1f1f1f" stroke-width="1.8" stroke-linecap="butt" stroke-linejoin="miter"/></svg>
<svg style="left:1710px;top:206.4px;" width="29" height="26" viewBox="0 0 29 26"><rect x="0.85" y="0.85" width="26.45" height="23.25" fill="#fafafa"/><path d="M9.7 0.85 V24.1 M18.5 0.85 V24.1 M0.85 8.6 H27.3 M0.85 16.4 H27.3" stroke="#8c8c8c" stroke-width="1.4" fill="none"/><rect x="0.85" y="0.85" width="26.45" height="23.25" fill="none" stroke="#444" stroke-width="1.7"/><rect x="5.2" y="7.4" width="10" height="10" fill="#8ec2ee" stroke="#1a6fc4" stroke-width="1.8"/>
<rect x="16.5" y="6" width="13" height="13" fill="#fff"/>
<path d="M18.3 8.6 L27.3 17 M27.3 8.6 L18.3 17" stroke="#e8453c" stroke-width="1.8" fill="none"/></svg>
<span class="t" style="left:1748.70px;top:211.02px;font-size:20px;color:#242424;letter-spacing:-0.041px;">Видалити</span>
<svg style="left:1869px;top:215.7px;" width="11.6" height="7.5" viewBox="0 0 11.6 7.5"><path d="M1 1 L5.8 6.0 L10.6 1" fill="none" stroke="#1f1f1f" stroke-width="1.8" stroke-linecap="butt" stroke-linejoin="miter"/></svg>
<svg style="left:1710px;top:256px;" width="29" height="30" viewBox="0 0 29 30"><rect x="0.85" y="4.8" width="26.45" height="23.5" fill="#fafafa"/><path d="M9.7 4.8 V28.3 M18.5 4.8 V28.3 M0.85 12.6 H27.3 M0.85 20.5 H27.3" stroke="#8c8c8c" stroke-width="1.4" fill="none"/><rect x="0.85" y="4.8" width="26.45" height="23.5" fill="none" stroke="#444" stroke-width="1.7"/><rect x="4" y="0" width="20.5" height="6.5" fill="#fff"/>
<path d="M5.4 3.4 H22.8 M5.4 0.8 V6 M22.8 0.8 V6" stroke="#1e8ad6" stroke-width="1.6" fill="none"/>
<rect x="7.3" y="11.8" width="13.6" height="10" fill="#8ec2ee" stroke="#1a6fc4" stroke-width="1.8"/></svg>
<span class="t" style="left:1748.70px;top:263.12px;font-size:20px;color:#242424;letter-spacing:0.543px;">Формат</span>
<svg style="left:1829.7px;top:267.7px;" width="11.6" height="7.5" viewBox="0 0 11.6 7.5"><path d="M1 1 L5.8 6.0 L10.6 1" fill="none" stroke="#1f1f1f" stroke-width="1.8" stroke-linecap="butt" stroke-linejoin="miter"/></svg>
<svg style="left:1937px;top:153px;" width="26" height="28" viewBox="0 0 26 28"><path d="M22.5 6.5 V2.7 H2.8 L13 14 L2.8 25.3 H22.5 V21.5" fill="none" stroke="#3b3b3b" stroke-width="1.7" stroke-linejoin="miter"/></svg>
<svg style="left:1988px;top:163.7px;" width="11.6" height="7.5" viewBox="0 0 11.6 7.5"><path d="M1 1 L5.8 6.0 L10.6 1" fill="none" stroke="#1f1f1f" stroke-width="1.8" stroke-linecap="butt" stroke-linejoin="miter"/></svg>
<svg style="left:1934px;top:206px;" width="30" height="26" viewBox="0 0 30 26"><rect x="1.8" y="1.8" width="26.2" height="22.6" fill="#fafafa" stroke="#3b3b3b" stroke-width="1.8"/>
<path d="M1.8 5.6 H28" stroke="#3b3b3b" stroke-width="1.4"/>
<path d="M15 9 V20 M10 15.5 L15 20.3 L20 15.5" fill="none" stroke="#1e8ad6" stroke-width="1.8" stroke-linecap="round" stroke-linejoin="round"/></svg>
<svg style="left:1972px;top:215.7px;" width="11.6" height="7.5" viewBox="0 0 11.6 7.5"><path d="M1 1 L5.8 6.0 L10.6 1" fill="none" stroke="#1f1f1f" stroke-width="1.8" stroke-linecap="butt" stroke-linejoin="miter"/></svg>
<svg style="left:1934px;top:256px;" width="30" height="30" viewBox="0 0 30 30"><path d="M18.3 2.4 L27.8 11.7 L11.3 27.4 L1.9 18.1 Z" fill="#fafafa" stroke="#9b3aa8" stroke-width="1.8" stroke-linejoin="miter"/>
<path d="M7.4 12.8 L16.4 21.8 L11.3 27.4 L1.9 18.1 Z" fill="#d28fda" stroke="#9b3aa8" stroke-width="1.8" stroke-linejoin="miter"/></svg>
<svg style="left:1972px;top:267.7px;" width="11.6" height="7.5" viewBox="0 0 11.6 7.5"><path d="M1 1 L5.8 6.0 L10.6 1" fill="none" stroke="#1f1f1f" stroke-width="1.8" stroke-linecap="butt" stroke-linejoin="miter"/></svg>
<span class="t" style="left:2060.20px;top:155.83px;font-size:30.5px;color:#1e8ad6;transform:scaleX(0.8651);transform-origin:0 50%;">A</span>
<span class="t" style="left:2061.60px;top:182.57px;font-size:27.5px;color:#3b3b3b;transform:scaleX(0.7849);transform-origin:0 50%;">Я</span>
<svg style="left:2080px;top:169px;" width="32" height="32" viewBox="0 0 32 32"><path d="M2.5 3 H29.5 V7.5 L19 18 V28.5 H13 V18 L2.5 7.5 Z" fill="#fafafa" stroke="#3b3b3b" stroke-width="1.7" stroke-linejoin="miter"/></svg>
<span class="t" style="left:2026.20px;top:228.82px;font-size:20px;color:#242424;letter-spacing:0.353px;">Сортувати й</span>
<span class="t" style="left:2017.70px;top:256.92px;font-size:20px;color:#242424;letter-spacing:0.034px;">фільтрувати</span>
<svg style="left:2139px;top:261.7px;" width="11.6" height="7.5" viewBox="0 0 11.6 7.5"><path d="M1 1 L5.8 6.0 L10.6 1" fill="none" stroke="#1f1f1f" stroke-width="1.8" stroke-linecap="butt" stroke-linejoin="miter"/></svg>
<svg style="left:2183px;top:157px;" width="56" height="56" viewBox="0 0 56 56"><circle cx="34" cy="20" r="17.6" fill="#fafafa" stroke="#3b3b3b" stroke-width="1.7"/><path d="M21.3 32.8 L2.3 51.5" stroke="#3b3b3b" stroke-width="1.7" stroke-linecap="round"/></svg>
<span class="t" style="left:2168.30px;top:228.82px;font-size:20px;color:#242424;letter-spacing:0.531px;">Знайти й</span>
<span class="t" style="left:2159.30px;top:256.92px;font-size:20px;color:#242424;letter-spacing:0.358px;">виділити</span>
<svg style="left:2249px;top:261.7px;" width="11.6" height="7.5" viewBox="0 0 11.6 7.5"><path d="M1 1 L5.8 6.0 L10.6 1" fill="none" stroke="#1f1f1f" stroke-width="1.8" stroke-linecap="butt" stroke-linejoin="miter"/></svg>
<svg style="left:2322px;top:158px;" width="50" height="50" viewBox="0 0 50 50"><rect x="1" y="1" width="47.6" height="47.6" fill="none" stroke="#d83b01" stroke-width="2"/>
<g fill="none" stroke="#d83b01" stroke-width="1.8"><rect x="6.5" y="6.5" width="15.5" height="15.5"/><rect x="27.5" y="6.5" width="15.5" height="15.5"/><rect x="6.5" y="27.5" width="15.5" height="15.5"/><rect x="27.5" y="27.5" width="15.5" height="15.5"/></g></svg>
<span class="t" style="left:2294.70px;top:228.82px;font-size:20px;color:#242424;letter-spacing:0.290px;">Надбудови</span>
<svg style="left:2501px;top:307.7px;" width="18.5" height="10" viewBox="0 0 18.5 10"><path d="M1 1 L9.25 8.5 L17.5 1" fill="none" stroke="#3b3b3b" stroke-width="1.7" stroke-linecap="butt" stroke-linejoin="miter"/></svg>
<div style="left:14px;top:351.5px;width:176.5px;height:39px;background:#fff;border:1px solid #d9d9d9;border-radius:8px;box-sizing:border-box"></div>
<span class="t" style="left:22.00px;top:362.07px;font-size:21px;color:#242424;transform:scaleX(0.9343);transform-origin:0 50%;">E2</span>
<svg style="left:164.5px;top:366.2px;" width="18" height="10.5" viewBox="0 0 18 10.5"><path d="M1 1 L9.0 9.0 L17 1" fill="none" stroke="#3b3b3b" stroke-width="1.6" stroke-linecap="butt" stroke-linejoin="miter"/></svg>
<div style="left:206.5px;top:362.5px;width:3.2px;height:3.2px;background:#3b3b3b"></div>
<div style="left:206.5px;top:370.5px;width:3.2px;height:3.2px;background:#3b3b3b"></div>
<div style="left:206.5px;top:378.5px;width:3.2px;height:3.2px;background:#3b3b3b"></div>
<div style="left:226.5px;top:351.5px;width:127px;height:39px;background:#fff;border:1px solid #d9d9d9;border-radius:8px;box-sizing:border-box"></div>
<svg style="left:236px;top:360px;" width="24" height="24" viewBox="0 0 24 24"><path d="M2 2 L21.5 21.5 M21.5 2 L2 21.5" stroke="#a3a3a3" stroke-width="1.5"/></svg>
<svg style="left:276px;top:360px;" width="28" height="24" viewBox="0 0 28 24"><path d="M1.5 11.5 L9.5 20.5 L26.5 2.5" fill="none" stroke="#a3a3a3" stroke-width="1.5"/></svg>
<span class="t" style="left:319.50px;top:356.06px;font-size:30px;color:#3a3a3a;font-weight:700;font-style:italic;font-family:'Liberation Serif',serif;">f</span>
<span class="t" style="left:331.00px;top:360.71px;font-size:24.5px;color:#3a3a3a;font-weight:700;font-style:italic;font-family:'Liberation Serif',serif;">x</span>
<div style="left:361.5px;top:351.5px;width:2184.5px;height:39px;background:#fff;border:1px solid #d9d9d9;border-radius:8px;box-sizing:border-box"></div>
<span class="t" style="left:381.00px;top:362.07px;font-size:21px;color:#242424;">2</span>
<svg style="left:2520.6px;top:363.7px;" width="18.4" height="10.5" viewBox="0 0 18.4 10.5"><path d="M1 1 L9.2 9.0 L17.4 1" fill="none" stroke="#3b3b3b" stroke-width="1.6" stroke-linecap="butt" stroke-linejoin="miter"/></svg>
<!-- s_grid -->
<div style="left:76px;top:456px;width:2450px;height:871px;background:#fff"></div>
<div style="left:267px;top:456px;width:1px;height:871px;background:#e2e2e2"></div>
<div style="left:459px;top:456px;width:1px;height:871px;background:#e2e2e2"></div>
<div style="left:651px;top:456px;width:1px;height:871px;background:#e2e2e2"></div>
<div style="left:843px;top:456px;width:1px;height:871px;background:#e2e2e2"></div>
<div style="left:1035px;top:456px;width:1px;height:871px;background:#e2e2e2"></div>
<div style="left:1227px;top:456px;width:1px;height:871px;background:#e2e2e2"></div>
<div style="left:1419px;top:456px;width:1px;height:871px;background:#e2e2e2"></div>
<div style="left:1611px;top:456px;width:1px;height:871px;background:#e2e2e2"></div>
<div style="left:1803px;top:456px;width:1px;height:871px;background:#e2e2e2"></div>
<div style="left:1995px;top:456px;width:1px;height:871px;background:#e2e2e2"></div>
<div style="left:2187px;top:456px;width:1px;height:871px;background:#e2e2e2"></div>
<div style="left:2379px;top:456px;width:1px;height:871px;background:#e2e2e2"></div>
<div style="left:76px;top:509px;width:2450px;height:1px;background:#e2e2e2"></div>
<div style="left:76px;top:563px;width:2450px;height:1px;background:#e2e2e2"></div>
<div style="left:76px;top:617px;width:2450px;height:1px;background:#e2e2e2"></div>
<div style="left:76px;top:671px;width:2450px;height:1px;background:#e2e2e2"></div>
<div style="left:76px;top:725px;width:2450px;height:1px;background:#e2e2e2"></div>
<div style="left:76px;top:779px;width:2450px;height:1px;background:#e2e2e2"></div>
<div style="left:76px;top:833px;width:2450px;height:1px;background:#e2e2e2"></div>
<div style="left:76px;top:887px;width:2450px;height:1px;background:#e2e2e2"></div>
<div style="left:76px;top:941px;width:2450px;height:1px;background:#e2e2e2"></div>
<div style="left:76px;top:995px;width:2450px;height:1px;background:#e2e2e2"></div>
<div style="left:76px;top:1049px;width:2450px;height:1px;background:#e2e2e2"></div>
<div style="left:76px;top:1103px;width:2450px;height:1px;background:#e2e2e2"></div>
<div style="left:76px;top:1157px;width:2450px;height:1px;background:#e2e2e2"></div>
<div style="left:76px;top:1211px;width:2450px;height:1px;background:#e2e2e2"></div>
<div style="left:76px;top:1265px;width:2450px;height:1px;background:#e2e2e2"></div>
<div style="left:76px;top:1319px;width:2450px;height:1px;background:#e2e2e2"></div>
<div style="left:843px;top:403px;width:193px;height:52px;background:#d2d2d2"></div>
<div style="left:75px;top:403px;width:1px;height:52px;background:#b4b4b4"></div>
<div style="left:267px;top:403px;width:1px;height:52px;background:#b4b4b4"></div>
<div style="left:459px;top:403px;width:1px;height:52px;background:#b4b4b4"></div>
<div style="left:651px;top:403px;width:1px;height:52px;background:#b4b4b4"></div>
<div style="left:843px;top:403px;width:1px;height:52px;background:#b4b4b4"></div>
<div style="left:1035px;top:403px;width:1px;height:52px;background:#b4b4b4"></div>
<div style="left:1227px;top:403px;width:1px;height:52px;background:#b4b4b4"></div>
<div style="left:1419px;top:403px;width:1px;height:52px;background:#b4b4b4"></div>
<div style="left:1611px;top:403px;width:1px;height:52px;background:#b4b4b4"></div>
<div style="left:1803px;top:403px;width:1px;height:52px;background:#b4b4b4"></div>
<div style="left:1995px;top:403px;width:1px;height:52px;background:#b4b4b4"></div>
<div style="left:2187px;top:403px;width:1px;height:52px;background:#b4b4b4"></div>
<div style="left:2379px;top:403px;width:1px;height:52px;background:#b4b4b4"></div>
<span class="t" style="left:159.49px;top:412.68px;font-size:36px;color:#1b1b1b;">A</span>
<span class="t" style="left:351.49px;top:412.68px;font-size:36px;color:#1b1b1b;">B</span>
<span class="t" style="left:542.50px;top:412.68px;font-size:36px;color:#1b1b1b;">C</span>
<span class="t" style="left:734.50px;top:412.68px;font-size:36px;color:#1b1b1b;">D</span>
<span class="t" style="left:927.49px;top:412.68px;font-size:36px;color:#1e6b41;">E</span>
<span class="t" style="left:1120.50px;top:412.68px;font-size:36px;color:#1b1b1b;">F</span>
<span class="t" style="left:1309.49px;top:412.68px;font-size:36px;color:#1b1b1b;">G</span>
<span class="t" style="left:1502.50px;top:412.68px;font-size:36px;color:#1b1b1b;">H</span>
<span class="t" style="left:1702.49px;top:412.68px;font-size:36px;color:#1b1b1b;">I</span>
<span class="t" style="left:1890.50px;top:412.68px;font-size:36px;color:#1b1b1b;">J</span>
<span class="t" style="left:2079.49px;top:412.68px;font-size:36px;color:#1b1b1b;">K</span>
<span class="t" style="left:2273.48px;top:412.68px;font-size:36px;color:#1b1b1b;">L</span>
<span class="t" style="left:2460.00px;top:412.68px;font-size:36px;color:#1b1b1b;">M</span>
<div style="left:4px;top:455px;width:72px;height:1px;background:#bdbdbd"></div>
<div style="left:76px;top:455px;width:2450px;height:1px;background:#9c9c9c"></div>
<div style="left:843px;top:454px;width:193px;height:2.2px;background:#1f7145"></div>
<svg style="left:26px;top:406px;" width="48" height="46" viewBox="0 0 48 46"><path d="M46 1 V45 H1 Z" fill="#b5b5b5"/></svg>
<div style="left:4px;top:510px;width:71px;height:107px;background:#d2d2d2"></div>
<div style="left:75px;top:456px;width:1px;height:871px;background:#b4b4b4"></div>
<div style="left:4px;top:509px;width:71px;height:1px;background:#cdcdcd"></div>
<div style="left:4px;top:563px;width:71px;height:1px;background:#cdcdcd"></div>
<div style="left:4px;top:617px;width:71px;height:1px;background:#cdcdcd"></div>
<div style="left:4px;top:671px;width:71px;height:1px;background:#cdcdcd"></div>
<div style="left:4px;top:725px;width:71px;height:1px;background:#cdcdcd"></div>
<div style="left:4px;top:779px;width:71px;height:1px;background:#cdcdcd"></div>
<div style="left:4px;top:833px;width:71px;height:1px;background:#cdcdcd"></div>
<div style="left:4px;top:887px;width:71px;height:1px;background:#cdcdcd"></div>
<div style="left:4px;top:941px;width:71px;height:1px;background:#cdcdcd"></div>
<div style="left:4px;top:995px;width:71px;height:1px;background:#cdcdcd"></div>
<div style="left:4px;top:1049px;width:71px;height:1px;background:#cdcdcd"></div>
<div style="left:4px;top:1103px;width:71px;height:1px;background:#cdcdcd"></div>
<div style="left:4px;top:1157px;width:71px;height:1px;background:#cdcdcd"></div>
<div style="left:4px;top:1211px;width:71px;height:1px;background:#cdcdcd"></div>
<div style="left:4px;top:1265px;width:71px;height:1px;background:#cdcdcd"></div>
<div style="left:4px;top:1319px;width:71px;height:1px;background:#cdcdcd"></div>
<div style="left:4px;top:1319px;width:72px;height:1px;background:#a6a6a6"></div>
<div style="left:73.6px;top:509.5px;width:2.2px;height:108px;background:#1f7145"></div>
<span class="t" style="left:27.98px;top:466.68px;font-size:36px;color:#1b1b1b;transform:scaleX(.92);transform-origin:50% 50%;">1</span>
<span class="t" style="left:27.98px;top:520.68px;font-size:36px;color:#1e6b41;transform:scaleX(.92);transform-origin:50% 50%;">2</span>
<span class="t" style="left:27.98px;top:574.68px;font-size:36px;color:#1e6b41;transform:scaleX(.92);transform-origin:50% 50%;">3</span>
<span class="t" style="left:27.98px;top:628.68px;font-size:36px;color:#1b1b1b;transform:scaleX(.92);transform-origin:50% 50%;">4</span>
<span class="t" style="left:27.98px;top:682.68px;font-size:36px;color:#1b1b1b;transform:scaleX(.92);transform-origin:50% 50%;">5</span>
<span class="t" style="left:27.98px;top:736.68px;font-size:36px;color:#1b1b1b;transform:scaleX(.92);transform-origin:50% 50%;">6</span>
<span class="t" style="left:27.98px;top:790.68px;font-size:36px;color:#1b1b1b;transform:scaleX(.92);transform-origin:50% 50%;">7</span>
<span class="t" style="left:27.98px;top:844.68px;font-size:36px;color:#1b1b1b;transform:scaleX(.92);transform-origin:50% 50%;">8</span>
<span class="t" style="left:27.98px;top:898.68px;font-size:36px;color:#1b1b1b;transform:scaleX(.92);transform-origin:50% 50%;">9</span>
<span class="t" style="left:17.98px;top:952.68px;font-size:36px;color:#1b1b1b;transform:scaleX(.92);transform-origin:50% 50%;">10</span>
<span class="t" style="left:17.98px;top:1006.68px;font-size:36px;color:#1b1b1b;transform:scaleX(.92);transform-origin:50% 50%;">11</span>
<span class="t" style="left:17.98px;top:1060.68px;font-size:36px;color:#1b1b1b;transform:scaleX(.92);transform-origin:50% 50%;">12</span>
<span class="t" style="left:17.98px;top:1114.68px;font-size:36px;color:#1b1b1b;transform:scaleX(.92);transform-origin:50% 50%;">13</span>
<span class="t" style="left:17.98px;top:1168.68px;font-size:36px;color:#1b1b1b;transform:scaleX(.92);transform-origin:50% 50%;">14</span>
<span class="t" style="left:17.98px;top:1222.68px;font-size:36px;color:#1b1b1b;transform:scaleX(.92);transform-origin:50% 50%;">15</span>
<span class="t" style="left:17.98px;top:1276.68px;font-size:36px;color:#1b1b1b;transform:scaleX(.92);transform-origin:50% 50%;">16</span>
<div style="left:269px;top:563.5px;width:190px;height:53px;background:#c8c8c8"></div>
<div style="left:266px;top:508px;width:195px;height:272px;border:3px solid #1f7145;box-sizing:border-box"></div>
<div style="left:268px;top:616.3px;width:187px;height:2.6px;background:#1f7145"></div>
<div style="left:454.2px;top:612.4px;width:7.9px;height:7.8px;background:#1f7145;border:1.2px solid #fff;box-sizing:border-box"></div>
<span class="t" style="left:413.23px;top:520.72px;font-size:36.3px;color:#000;">10</span>
<span class="t" style="left:413.23px;top:574.52px;font-size:36.3px;color:#000;">20</span>
<div style="left:842px;top:508px;width:195px;height:165px;border:3px solid #1f7145;box-sizing:border-box"></div>
<div style="left:844px;top:562.3px;width:187px;height:2.6px;background:#1f7145"></div>
<div style="left:1030.2px;top:558.4px;width:7.9px;height:7.8px;background:#1f7145;border:1.2px solid #fff;box-sizing:border-box"></div>
<span class="t" style="left:1008.01px;top:520.92px;font-size:36.3px;color:#000;">2</span>
<div style="left:466px;top:743.5px;width:27.5px;height:34px;background:#fff;border:1.8px solid #6a6a6a;border-radius:6px;box-sizing:border-box;box-shadow:0 6px 10px rgba(0,0,0,.18)"></div>
<span class="t" style="left:469.70px;top:754.21px;font-size:18px;color:#6a6a6a;letter-spacing:-0.031px;">50</span>
<div style="left:1042px;top:648.8px;width:17px;height:34px;background:#fff;border:1.8px solid #6a6a6a;border-radius:6px;box-sizing:border-box;box-shadow:0 6px 10px rgba(0,0,0,.18)"></div>
<span class="t" style="left:1045.29px;top:659.51px;font-size:18px;color:#6a6a6a;">2</span>
<div style="left:2530px;top:404px;width:25px;height:923px;background:#f4f4f4;border-radius:12px"></div>
<svg style="left:2534px;top:411px;" width="18" height="14" viewBox="0 0 18 14"><path d="M9 1.5 L16.5 11 Q17 12.5 15.5 12.5 H2.5 Q1 12.5 1.5 11 Z" fill="#8a8a8a"/></svg>
<div style="left:2536px;top:433.5px;width:14px;height:700px;background:#737373;border-radius:7px"></div>
<svg style="left:2534px;top:1308px;" width="18" height="14" viewBox="0 0 18 14"><path d="M9 12.5 L16.5 3 Q17 1.5 15.5 1.5 H2.5 Q1 1.5 1.5 3 Z" fill="#8a8a8a"/></svg>
<!-- s_bottom -->
<div style="left:4px;top:1327px;width:2552px;height:57px;background:#f0f0f0"></div>
<div style="left:191px;top:1327px;width:115.2px;height:49px;background:#fff;border-radius:0 0 8px 8px;box-shadow:0 1px 2px rgba(0,0,0,.10)"></div>
<span class="t" style="left:203.54px;top:1339.16px;font-size:25.5px;color:#1f1f1f;letter-spacing:-0.069px;-webkit-text-stroke:0.45px #1f1f1f;">Аркуш1</span>
<div style="left:205.3px;top:1368.2px;width:86.7px;height:2.8px;background:#107c41"></div>
<div style="left:184.5px;top:1327px;width:6.5px;height:6.5px;background:#fff"><div style="left:0;top:0;width:6.5px;height:6.5px;background:#f0f0f0;border-top-right-radius:6.5px"></div></div>
<div style="left:306px;top:1327px;width:6.5px;height:6.5px;background:#fff"><div style="left:0;top:0;width:6.5px;height:6.5px;background:#f0f0f0;border-top-left-radius:6.5px"></div></div>
<svg style="left:36px;top:1343px;" width="14" height="20" viewBox="0 0 14 20"><path d="M11 2 L3 10 L11 18" fill="none" stroke="#8d8d8d" stroke-width="1.6" stroke-linecap="round" stroke-linejoin="round"/></svg>
<svg style="left:93px;top:1343px;" width="14" height="20" viewBox="0 0 14 20"><path d="M3 2 L11 10 L3 18" fill="none" stroke="#8d8d8d" stroke-width="1.6" stroke-linecap="round" stroke-linejoin="round"/></svg>
<div style="left:313px;top:1339px;width:1.5px;height:31px;background:#c4c4c4"></div>
<svg style="left:386px;top:1342px;" width="22" height="22" viewBox="0 0 22 22"><path d="M11 1.5 V20.5 M1.5 11 H20.5" stroke="#3b3b3b" stroke-width="1.7"/></svg>
<div style="left:1541.5px;top:1346px;width:3.2px;height:3.2px;background:#3b3b3b"></div>
<div style="left:1541.5px;top:1353.8px;width:3.2px;height:3.2px;background:#3b3b3b"></div>
<div style="left:1541.5px;top:1361.6px;width:3.2px;height:3.2px;background:#3b3b3b"></div>
<div style="left:1571px;top:1340px;width:956.5px;height:29px;background:#f6f6f6;border-radius:14px"></div>
<svg style="left:1579px;top:1346px;" width="14" height="17" viewBox="0 0 14 17"><path d="M12.5 1.5 V15.5 Q12.5 16.5 11.5 16 L1.5 9 Q1 8.5 1.5 8 L11.5 1 Q12.5 0.5 12.5 1.5 Z" fill="#737373"/></svg>
<div style="left:1600px;top:1346.5px;width:822.5px;height:15px;background:#737373;border-radius:7.5px"></div>
<svg style="left:2507px;top:1346px;" width="14" height="17" viewBox="0 0 14 17"><path d="M1.5 1.5 V15.5 Q1.5 16.5 2.5 16 L12.5 9 Q13 8.5 12.5 8 L2.5 1 Q1.5 0.5 1.5 1.5 Z" fill="#737373"/></svg>
<div style="left:3px;top:1383px;width:2554px;height:2px;background:#c7c5c3"></div>
<div style="left:4px;top:1385px;width:2552px;height:52px;background:#f3f3f3"></div>
<span class="t" style="left:22.83px;top:1405.01px;font-size:18px;color:#3b3b3b;letter-spacing:0.462px;">Щоб вибрати параметри заповнення, відпустіть кнопку за межами виділення; щоб очистити клітинки, перетягніть до виділення</span>
<div style="left:2003.5px;top:1385px;width:73px;height:52px;background:#e0e0e0"></div>
<svg style="left:2026px;top:1399px;" width="26" height="26" viewBox="0 0 26 26"><path d="M2 2 H24 V24 H2 Z M2 9.3 H24 M2 16.6 H24 M9.3 2 V24 M16.6 2 V24" fill="none" stroke="#3b3b3b" stroke-width="1.6"/></svg>
<svg style="left:2100px;top:1399px;" width="28" height="26" viewBox="0 0 28 26"><rect x="2" y="2" width="24" height="22" fill="none" stroke="#3b3b3b" stroke-width="1.6"/><rect x="7.5" y="6.5" width="13" height="13" fill="none" stroke="#3b3b3b" stroke-width="1.5"/><path d="M10 10.5 H18 M10 13 H18 M10 15.5 H18" stroke="#3b3b3b" stroke-width="1.2"/></svg>
<svg style="left:2174px;top:1399px;" width="28" height="26" viewBox="0 0 28 26"><path d="M2 2 H26 V24 H2 Z M8 2 V14 H19 V2 M13.5 2 V8" fill="none" stroke="#3b3b3b" stroke-width="1.6"/></svg>
<div style="left:2236px;top:1410.8px;width:13px;height:1.5px;background:#3b3b3b"></div>
<div style="left:2260px;top:1410.8px;width:172.5px;height:1.5px;background:#3b3b3b"></div>
<div style="left:2345px;top:1405px;width:1.5px;height:13px;background:#3b3b3b"></div>
<div style="left:2359px;top:1401.5px;width:8.5px;height:19.5px;background:#5a5a5a;border-radius:1.5px"></div>
<svg style="left:2441px;top:1403px;" width="16" height="16" viewBox="0 0 16 16"><path d="M8 1 V15 M1 8 H15" stroke="#3b3b3b" stroke-width="1.5"/></svg>
<span class="t" style="left:2488.83px;top:1405.01px;font-size:18px;color:#3b3b3b;letter-spacing:0.311px;">160%</span>
<div style="left:0px;top:0px;width:2560px;height:1440px;border:3.2px solid #107c41;border-radius:16.5px;box-sizing:border-box"></div>
<div style="left:0px;top:1436.6px;width:2560px;height:3.4px;background:#107c41"></div>
<!-- s_menu -->
<div style="left:1044px;top:674px;width:401px;height:643.2px;background:#fff;border:1.9px solid #555;border-radius:8px;box-sizing:border-box;box-shadow:0 8px 16px rgba(0,0,0,.15),0 0 6px rgba(0,0,0,.08)"></div>
<div style="left:1048px;top:1262.4px;width:393px;height:51.5px;background:#f2f2f2;border-radius:0 0 4px 4px"></div>
<div style="left:1104px;top:887.7px;width:337px;height:2px;background:#c9c9c9"></div>
<div style="left:1104px;top:1102.1px;width:337px;height:2px;background:#c9c9c9"></div>
<span class="t" style="left:1109.87px;top:695.30px;font-size:20.5px;color:#1f1f1f;letter-spacing:0.481px;"><u>К</u>опіювати клітинки</span>
<span class="t" style="left:1109.87px;top:747.30px;font-size:20.5px;color:#1f1f1f;letter-spacing:0.320px;">Заповн<u>и</u>ти</span>
<span class="t" style="left:1109.87px;top:799.10px;font-size:20.5px;color:#1f1f1f;letter-spacing:0.091px;">Зап<u>о</u>внити лише формати</span>
<span class="t" style="left:1109.87px;top:850.90px;font-size:20.5px;color:#1f1f1f;letter-spacing:0.221px;">Заповнити лише зна<u>ч</u>ення</span>
<span class="t" style="left:1109.87px;top:909.10px;font-size:20.5px;color:#bcbcbc;letter-spacing:0.270px;">Заповнити по дн<u>я</u>х</span>
<span class="t" style="left:1109.87px;top:961.10px;font-size:20.5px;color:#bcbcbc;letter-spacing:0.342px;">Заповнити по ро<u>б</u>очих днях</span>
<span class="t" style="left:1109.87px;top:1012.90px;font-size:20.5px;color:#bcbcbc;letter-spacing:0.372px;"><u>З</u>аповнити по місяцях</span>
<span class="t" style="left:1109.87px;top:1064.90px;font-size:20.5px;color:#bcbcbc;letter-spacing:0.397px;"><u>З</u>аповнити по роках</span>
<span class="t" style="left:1109.87px;top:1122.70px;font-size:20.5px;color:#bcbcbc;letter-spacing:0.427px;"><u>Л</u>інійне наближення</span>
<span class="t" style="left:1109.87px;top:1175.10px;font-size:20.5px;color:#bcbcbc;letter-spacing:0.245px;"><u>Е</u>кспоненціальне наближення</span>
<span class="t" style="left:1109.87px;top:1226.90px;font-size:20.5px;color:#1f1f1f;letter-spacing:0.273px;">Митт<u>є</u>ве заповнення</span>
<span class="t" style="left:1109.87px;top:1278.60px;font-size:20.5px;color:#1f1f1f;letter-spacing:0.113px;">Про<u>г</u>ресія...</span>
<!-- s_dialog -->
<div style="left:1666px;top:585px;width:638px;height:432px;background:#f0f0f0;border:1.9px solid #a3a3a3;border-radius:13px;box-sizing:border-box;overflow:hidden;box-shadow:0 32px 64px rgba(0,0,0,.30),0 2px 21px rgba(0,0,0,.20)"><div style="left:0;top:0;width:638px;height:50.5px;background:#f2f3f7"></div></div>
<span class="t" style="left:1677.90px;top:600.85px;font-size:21.5px;color:#1f1f1f;letter-spacing:-0.029px;">Прогресія</span>
<span class="t" style="left:2178.60px;top:601.92px;font-size:20px;color:#1f1f1f;transform:scaleX(0.7191);transform-origin:0 50%;">?</span>
<svg style="left:2253px;top:601px;" width="20" height="20" viewBox="0 0 20 20"><path d="M2.5 2.5 L17.5 17.5 M17.5 2.5 L2.5 17.5" stroke="#1f1f1f" stroke-width="1.6" stroke-linecap="round"/></svg>
<div style="left:1678px;top:661.2px;width:181.6px;height:178.2px;border:1px solid #dadada;box-sizing:border-box"></div>
<div style="left:1878.3px;top:661.2px;width:206.4px;height:178.2px;border:1px solid #dadada;box-sizing:border-box"></div>
<div style="left:2103.3px;top:661.2px;width:187.5px;height:178.2px;border:1px solid #dadada;box-sizing:border-box"></div>
<div style="left:1686px;top:655px;width:129.5px;height:14px;background:#f0f0f0"></div>
<div style="left:1886px;top:655px;width:37px;height:14px;background:#f0f0f0"></div>
<div style="left:2111px;top:655px;width:78px;height:14px;background:#f0f0f0"></div>
<span class="t" style="left:1688.10px;top:653.79px;font-size:18.5px;color:#1f1f1f;letter-spacing:0.044px;">Розташування</span>
<span class="t" style="left:1888.10px;top:653.79px;font-size:18.5px;color:#1f1f1f;letter-spacing:0.539px;">Тип</span>
<span class="t" style="left:2113.10px;top:653.79px;font-size:18.5px;color:#8d8d8d;letter-spacing:0.492px;">Одиниці</span>
<div style="left:1694.7px;top:692.7px;width:20px;height:20px;border:1.4px solid #5f5f5f;border-radius:50%;box-sizing:border-box;background:#f7f7f7"></div>
<div style="left:1694.7px;top:729.5px;width:20px;height:20px;border-radius:50%;background:#005fb8"></div>
<div style="left:1700.5px;top:735.3px;width:8.4px;height:8.4px;border-radius:50%;background:#fff"></div>
<span class="t" style="left:1720.43px;top:693.94px;font-size:19.5px;color:#1f1f1f;letter-spacing:-0.325px;">за р<u>я</u>дками</span>
<span class="t" style="left:1720.43px;top:730.74px;font-size:19.5px;color:#1f1f1f;letter-spacing:-0.268px;"><u>з</u>а стовпцями</span>
<div style="left:1894.7px;top:692.7px;width:20px;height:20px;border:1.4px solid #5f5f5f;border-radius:50%;box-sizing:border-box;background:#f7f7f7"></div>
<div style="left:1894.7px;top:729.5px;width:20px;height:20px;border-radius:50%;background:#005fb8"></div>
<div style="left:1900.5px;top:735.3px;width:8.4px;height:8.4px;border-radius:50%;background:#fff"></div>
<div style="left:1894.7px;top:766.5px;width:20px;height:20px;border:1.4px solid #5f5f5f;border-radius:50%;box-sizing:border-box;background:#f7f7f7"></div>
<div style="left:1894.7px;top:803.4px;width:20px;height:20px;border:1.4px solid #5f5f5f;border-radius:50%;box-sizing:border-box;background:#f7f7f7"></div>
<span class="t" style="left:1921.03px;top:693.94px;font-size:19.5px;color:#1f1f1f;transform:scaleX(0.9627);transform-origin:0 50%;"><u>а</u>рифметична</span>
<span class="t" style="left:1921.03px;top:730.74px;font-size:19.5px;color:#1f1f1f;letter-spacing:-0.136px;"><u>г</u>еометрична</span>
<span class="t" style="left:1921.03px;top:767.74px;font-size:19.5px;color:#1f1f1f;transform:scaleX(0.9643);transform-origin:0 50%;"><u>д</u>ати</span>
<span class="t" style="left:1921.03px;top:804.74px;font-size:19.5px;color:#1f1f1f;letter-spacing:-0.239px;">а<u>в</u>тозаповнення</span>
<div style="left:2119.7px;top:692.7px;width:20px;height:20px;border-radius:50%;background:#c3c3c3"></div>
<div style="left:2125.5px;top:698.5px;width:8.4px;height:8.4px;border-radius:50%;background:#fff"></div>
<div style="left:2119.7px;top:729.5px;width:20px;height:20px;border:1.4px solid #c6c6c6;border-radius:50%;box-sizing:border-box;background:#f7f7f7"></div>
<div style="left:2119.7px;top:766.5px;width:20px;height:20px;border:1.4px solid #c6c6c6;border-radius:50%;box-sizing:border-box;background:#f7f7f7"></div>
<div style="left:2119.7px;top:803.4px;width:20px;height:20px;border:1.4px solid #c6c6c6;border-radius:50%;box-sizing:border-box;background:#f7f7f7"></div>
<span class="t" style="left:2146.03px;top:693.94px;font-size:19.5px;color:#8d8d8d;letter-spacing:-0.337px;">день</span>
<span class="t" style="left:2146.03px;top:730.74px;font-size:19.5px;color:#8d8d8d;letter-spacing:-0.007px;">робочий день</span>
<span class="t" style="left:2146.03px;top:767.74px;font-size:19.5px;color:#8d8d8d;letter-spacing:-0.049px;">місяць</span>
<span class="t" style="left:2146.03px;top:804.74px;font-size:19.5px;color:#8d8d8d;letter-spacing:1.713px;">рік</span>
<div style="left:1677.7px;top:863.3px;width:20px;height:19.6px;background:#f7f7f7;border:1.4px solid #5f5f5f;border-radius:4px;box-sizing:border-box"></div>
<span class="t" style="left:1704.43px;top:864.94px;font-size:19.5px;color:#1f1f1f;letter-spacing:-0.189px;">Ав<u>т</u>оматичне визначення кроку</span>
<span class="t" style="left:1677.03px;top:914.94px;font-size:19.5px;color:#1f1f1f;letter-spacing:0.036px;"><u>К</u>рок:</span>
<div style="left:1741px;top:905px;width:170.7px;height:37.7px;background:#fff;border:1px solid #b9b9b9;box-sizing:border-box"></div>
<span class="t" style="left:1746.70px;top:912.51px;font-size:18px;color:#1f1f1f;">2</span>
<span class="t" style="left:1928.03px;top:914.94px;font-size:19.5px;color:#1f1f1f;letter-spacing:-0.197px;">Грани<u>ч</u>не значення:</span>
<div style="left:2121px;top:905px;width:170.7px;height:37.7px;background:#fff;border:1px solid #b9b9b9;box-sizing:border-box"></div>
<span class="t" style="left:2126.13px;top:912.51px;font-size:18px;color:#1f1f1f;letter-spacing:0.211px;">1024</span>
<div style="left:1999px;top:959.3px;width:136.7px;height:42.4px;background:#fdfdfd;border:1.6px solid #0067c0;border-radius:5px;box-sizing:border-box"></div>
<span class="t" style="left:2053.21px;top:971.94px;font-size:19.5px;color:#1f1f1f;">OK</span>
<div style="left:2154px;top:959.3px;width:136.7px;height:42.4px;background:#fdfdfd;border:1px solid #d2d2d2;border-bottom-color:#bdbdbd;border-radius:5px;box-sizing:border-box"></div>
<span class="t" style="left:2177.03px;top:971.94px;font-size:19.5px;color:#1f1f1f;transform:scaleX(0.9452);transform-origin:0 50%;">Скасувати</span>
</div></body></html>
